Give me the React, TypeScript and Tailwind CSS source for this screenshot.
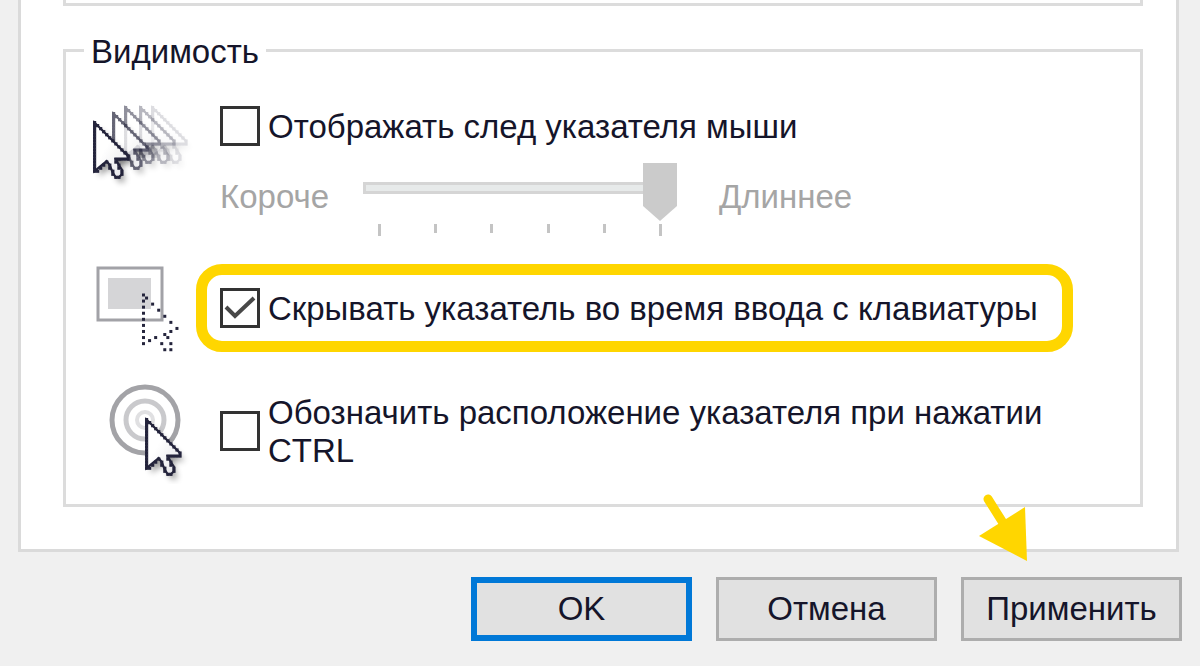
import { useState, type InputHTMLAttributes, type ReactNode } from "react";

const CURSOR = [
  "#...........",
  "##..........",
  "#.#.........",
  "#..#........",
  "#...#.......",
  "#....#......",
  "#.....#.....",
  "#......#....",
  "#.......#...",
  "#........#..",
  "#.........#.",
  "#..........#",
  "#......#####",
  "#...#..#....",
  "#..#.#..#...",
  "#.#..#..#...",
  "##....#..#..",
  "......#..#..",
  ".......##...",
];

const DOTS = [
  [0, 0], [1, 1], [0, 2], [3, 3], [0, 4], [5, 5], [0, 6], [7, 7], [0, 8], [9, 9], [0, 10], [11, 11],
  [0, 12], [9, 12], [7, 13], [8, 14], [4, 14], [0, 14], [2, 15], [0, 16], [6, 16], [9, 16], [7, 18], [9, 18],
];

function CursorShape({ x, y, opacity = 1 }: { x: number; y: number; opacity?: number }) {
  return (
    <g transform={`translate(${x} ${y}) scale(3.04)`} opacity={opacity}>
      <path d="M.5 1V16.5L4.5 13.5L7 18.5H9L7.5 12.5H11.5Z" transform="translate(1.6 1.6)" fill="#000" opacity=".4" filter="url(#soft)" />
      <path d="M.5 .5V16.5L4.5 13.2L5.5 14.5L6.5 17L7.5 18.5H8.5L9.5 17.5V16L8.5 14.5L7.5 12.5H11.5V11.5Z" fill="url(#sheen)" stroke="#24243c" strokeWidth=".7" />
      {CURSOR.flatMap((row, r) =>
        [...row].map((c, i) => (c === "#" ? <rect key={`${r}-${i}`} x={i} y={r} width="1.05" height="1.05" fill="#24243c" /> : null)),
      )}
    </g>
  );
}

function TrailIcon() {
  return (
    <svg width="112" height="96" viewBox="84 98 112 96" aria-hidden="true">
      <defs>
        <filter id="soft" x="-40%" y="-40%" width="180%" height="180%">
          <feGaussianBlur stdDeviation="1.1" />
        </filter>
        <linearGradient id="sheen" x1="0" y1="0" x2="1" y2="1">
          <stop offset=".4" stopColor="#fff" />
          <stop offset="1" stopColor="#e2e2e6" />
        </linearGradient>
      </defs>
      <CursorShape x={151} y={106} opacity={0.15} />
      <CursorShape x={139} y={106} opacity={0.32} />
      <CursorShape x={124} y={106} opacity={0.5} />
      <CursorShape x={112} y={112} opacity={0.7} />
      <CursorShape x={93} y={121} />
    </svg>
  );
}

function HideIcon() {
  return (
    <svg width="112" height="96" viewBox="84 260 112 96" aria-hidden="true">
      <rect x="98" y="268" width="64" height="52" fill="#fff" stroke="#a2a2a7" strokeWidth="3" />
      <rect x="108" y="278" width="43" height="31" fill="#d5d5d7" />
      {DOTS.map(([x, y]) => (
        <rect key={`${x}-${y}`} x={142 + x * 3.04} y={293.5 + y * 3.04} width="3" height="3" fill="#24243c" />
      ))}
    </svg>
  );
}

function LocateIcon() {
  return (
    <svg width="112" height="104" viewBox="84 380 112 104" aria-hidden="true">
      <circle cx="145" cy="420" r="33" fill="#fff" stroke="#a3a3a7" strokeWidth="5" />
      <circle cx="145" cy="420" r="19" fill="none" stroke="#c9c9cc" strokeWidth="5" />
      <circle cx="145" cy="420" r="8" fill="none" stroke="#e0e0e2" strokeWidth="4" />
      <CursorShape x={145} y={418} />
    </svg>
  );
}

function CheckBox({ children, ...props }: InputHTMLAttributes<HTMLInputElement>) {
  return (
    <>
      <span className="relative size-10 shrink-0">
        <input type="checkbox" className="peer block size-10 appearance-none border-3 border-[#333] bg-white" {...props} />
        <svg viewBox="0 0 40 40" className="pointer-events-none absolute inset-0 hidden peer-checked:block" aria-hidden="true">
          <path d="M6 19L15 28L34 10" fill="none" stroke="#484848" strokeWidth="4" />
        </svg>
      </span>
      <span className="pt-0.5">{children}</span>
    </>
  );
}

function Row({ icon, children }: { icon: ReactNode; children: ReactNode }) {
  return (
    <div className="flex">
      <div className="w-28 shrink-0">{icon}</div>
      <div className="min-w-0 flex-1">{children}</div>
    </div>
  );
}

const TICKS = ["h-3", "h-[9px]", "h-[9px]", "h-[9px]", "h-[9px]", "h-3"];

export default function App() {
  const [trail, setTrail] = useState(false);
  const [hide, setHide] = useState(true);
  const [locate, setLocate] = useState(false);

  return (
    <main className="min-h-screen overflow-hidden bg-[#f0f0f0] pr-[18px] pb-6 pl-[18px] font-['Liberation_Sans',Arial,sans-serif] text-[33px] leading-[38px] text-[#15152a]">
      <section className="mr-[3px] border-x-3 border-b-3 border-[#dadada] bg-white pr-[33px] pb-[42px] pl-[42px]">
        <div className="h-1.5 border-x-3 border-b-3 border-[#dcdcdc]" />
        <fieldset className="mt-[22px] min-w-0 border-3 border-[#dcdcdc] pb-5 pl-[18px]">
          <legend className="px-[7px] pt-1 leading-10">Видимость</legend>
          <div className="flex flex-col gap-6 pt-[26px]">
            <Row icon={<TrailIcon />}>
              <label className="ml-6 flex items-center gap-2 pt-2">
                <CheckBox checked={trail} onChange={(e) => setTrail(e.target.checked)}>
                  Отображать след указателя мыши
                </CheckBox>
              </label>
              <div className="ml-6 flex items-start pt-4 text-[#a5a5a5]">
                <label htmlFor="length" className="w-[143px] pt-4">
                  Короче
                </label>
                <div className="w-[314px]">
                  <input
                    id="length"
                    type="range"
                    min={0}
                    max={5}
                    defaultValue={5}
                    disabled
                    className="block h-[52px] w-full appearance-none bg-transparent [&::-webkit-slider-runnable-track]:h-3 [&::-webkit-slider-runnable-track]:bg-[#e7eaea] [&::-webkit-slider-runnable-track]:shadow-[inset_0_0_0_3px_#d5d5d5] [&::-webkit-slider-thumb]:-mt-[19px] [&::-webkit-slider-thumb]:h-[58px] [&::-webkit-slider-thumb]:w-[34px] [&::-webkit-slider-thumb]:appearance-none [&::-webkit-slider-thumb]:bg-[#cbcbcb] [&::-webkit-slider-thumb]:[clip-path:polygon(0_0,100%_0,100%_74%,50%_100%,0_74%)]"
                  />
                  <div className="mt-2.5 flex h-3 justify-between px-[15px]">
                    {TICKS.map((h, i) => (
                      <span key={i} className={`w-[3px] bg-[#c4c4c4] ${h}`} />
                    ))}
                  </div>
                </div>
                <span className="ml-[42px] pt-4">Длиннее</span>
              </div>
            </Row>
            <Row icon={<HideIcon />}>
              <label className="mt-1 mr-[67px] flex h-[88px] items-center gap-2 rounded-[26px] border-11 border-[#ffd600] pl-[13px] whitespace-nowrap">
                <CheckBox checked={hide} onChange={(e) => setHide(e.target.checked)}>
                  Скрывать указатель во время ввода с клавиатуры
                </CheckBox>
              </label>
            </Row>
            <Row icon={<LocateIcon />}>
              <label className="mr-16 ml-6 flex items-center gap-2 pt-3">
                <CheckBox checked={locate} onChange={(e) => setLocate(e.target.checked)}>
                  Обозначить расположение указателя при нажатии CTRL
                </CheckBox>
              </label>
            </Row>
          </div>
        </fieldset>
      </section>
      <footer className="mt-[25px] flex justify-end gap-6">
        <button className="h-16 w-[221px] border-6 border-[#0078d7] bg-[#e1e1e1]">OK</button>
        <button className="h-16 w-[221px] border-3 border-[#adadad] bg-[#e1e1e1]">Отмена</button>
        <div className="relative">
          <svg viewBox="0 0 50 70" className="pointer-events-none absolute -top-[84px] left-[18px] h-[70px] w-[50px]" aria-hidden="true">
            <path d="M9 6L26 33" stroke="#ffd600" strokeWidth="9" strokeLinecap="round" />
            <path d="M46 14L48 68L0 43Z" fill="#ffd600" />
          </svg>
          <button className="h-16 w-[221px] border-3 border-[#adadad] bg-[#e1e1e1]">Применить</button>
        </div>
      </footer>
    </main>
  );
}
